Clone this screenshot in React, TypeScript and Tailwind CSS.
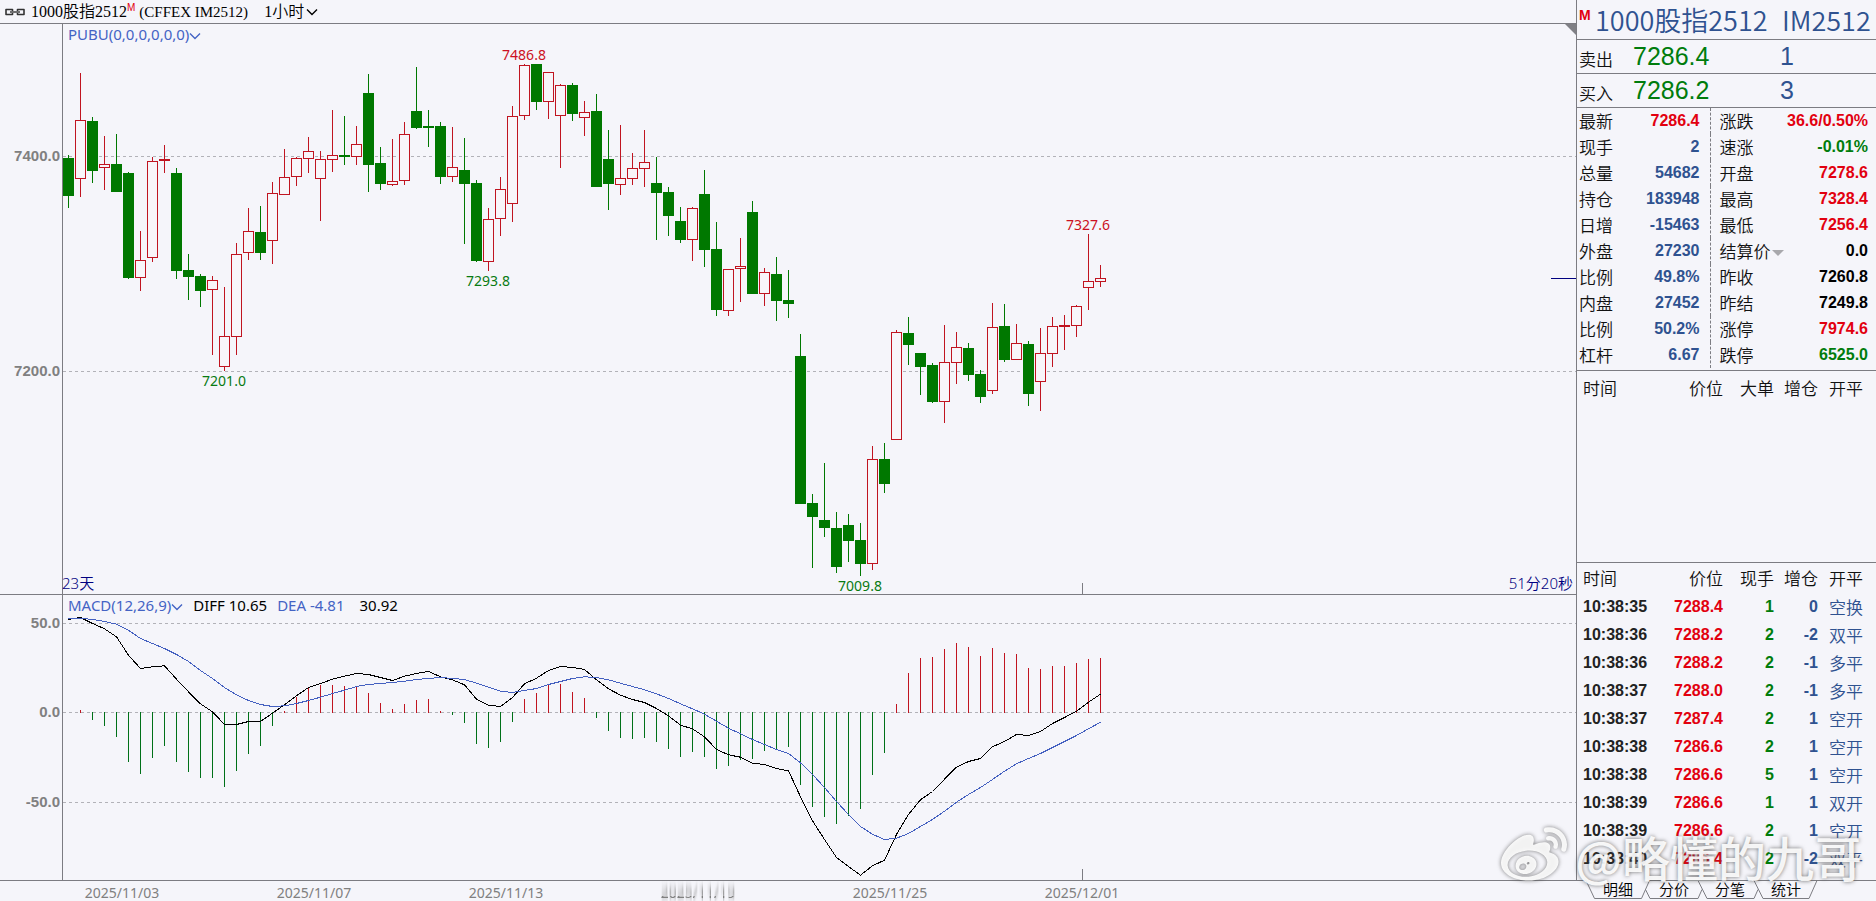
import React from "react";
import { FaWeibo } from "react-icons/fa";

type Candle = [high: number, top: number, bottom: number, low: number, kind: "r" | "g"];

// Chart geometry is kept on a grid with three units per pixel.
const UNIT = 3;
const px = (v: number) => Math.floor(v / UNIT);
const centerX = (i: number) => 68 + i * 12;

const shift = (list: Candle[], dy: number): Candle[] =>
  list.map(([h, t, b, l, k]) => [h + dy, t + dy, b + dy, l + dy, k]);

const candles: Candle[] = [
  [465, 474, 587, 623, "g"], [219, 360, 536, 590, "r"], [351, 363, 510, 548, "g"], [408, 492, 503, 567, "r"],
  [402, 492, 575, 575, "g"], [516, 519, 833, 836, "g"], [693, 780, 833, 872, "r"], [471, 483, 773, 785, "r"],
  [435, 477, 482, 518, "r"], [504, 519, 812, 836, "g"], [762, 810, 830, 899, "g"], [822, 828, 872, 920, "g"],
  [828, 840, 869, 1064, "r"], [861, 1008, 1100, 1112, "r"], [729, 762, 1010, 1064, "r"], [624, 693, 758, 779, "r"],
  [618, 696, 758, 779, "g"], [546, 579, 722, 791, "r"], [447, 531, 584, 584, "r"], [471, 474, 530, 557, "r"],
  [411, 453, 476, 518, "r"], [453, 477, 536, 662, "r"], [330, 465, 479, 515, "r"], [348, 465, 470, 494, "g"],
  [378, 432, 470, 494, "r"], [222, 279, 494, 575, "g"], [441, 489, 551, 567, "g"], [417, 543, 554, 557, "r"],
  [366, 402, 542, 554, "r"], [201, 333, 381, 386, "g"],
  ...shift(
    [
      [240, 288, 293, 350, "g"], [276, 288, 440, 461, "g"], [291, 411, 440, 455, "r"], [324, 420, 461, 641, "g"],
      [450, 459, 692, 695, "g"], [534, 567, 695, 722, "r"], [441, 477, 566, 617, "r"], [228, 258, 521, 575, "r"],
      [102, 105, 257, 269, "r"], [102, 102, 215, 239, "g"], [126, 126, 215, 266, "r"], [162, 165, 257, 413, "r"],
      [159, 165, 251, 272, "g"], [213, 246, 263, 317, "r"], [192, 243, 470, 470, "g"], [300, 387, 461, 539, "g"],
      [285, 444, 464, 494, "r"], [369, 414, 446, 464, "r"], [300, 396, 416, 470, "r"], [381, 459, 488, 629, "g"],
      [471, 486, 557, 617, "g"], [531, 573, 629, 638, "g"], [531, 534, 629, 692, "r"], [420, 492, 659, 710, "g"],
      [576, 657, 839, 857, "g"], [717, 717, 842, 857, "r"], [624, 708, 716, 815, "r"], [513, 546, 791, 791, "g"],
      [714, 726, 791, 827, "r"], [681, 732, 812, 872, "g"], [720, 810, 821, 863, "g"],
    ],
    90,
  ),
  ...shift(
    [
      [462, 528, 971, 971, "g"], [942, 969, 1010, 1163, "g"], [849, 1020, 1043, 1070, "g"], [996, 1044, 1160, 1178, "g"],
      [1002, 1035, 1082, 1145, "g"], [1029, 1080, 1151, 1187, "g"], [798, 837, 1151, 1169, "r"], [789, 837, 911, 938, "g"],
      [450, 456, 779, 779, "r"], [411, 459, 494, 554, "g"], [519, 519, 560, 644, "g"], [549, 555, 665, 668, "g"],
      [435, 546, 665, 728, "r"], [456, 501, 548, 611, "r"], [489, 504, 584, 602, "g"], [570, 582, 650, 668, "g"],
      [369, 441, 632, 641, "r"], [372, 438, 539, 545, "g"], [432, 489, 539, 539, "r"], [483, 492, 641, 677, "g"],
      [444, 519, 605, 692, "r"], [411, 438, 521, 560, "r"], [405, 435, 440, 509, "r"], [375, 378, 437, 470, "r"],
      [162, 303, 323, 389, "r"], [255, 294, 305, 320, "r"],
    ],
    540,
  ),
];

// Signed distance of each value from the zero line.
const early = (list: number[]) => list.map((v) => v - 457);
const late = (list: number[]) => list.map((v) => v - 397);

const histogram = [
  ...early([457, 450, 479, 497, 530, 605, 641, 593, 557, 605, 635, 653, 653, 680, 632, 581, 557, 497, 453, 411, 384, 375, 375, 378, 381, 399, 429, 447]),
  ...late([
    372, 360, 357, 393, 404, 428, 491, 503, 485, 425, 357, 339, 315, 312, 336, 354, 413, 452, 473, 476, 473, 485, 506, 530,
    515, 530, 566, 557, 539, 536, 512, 509, 500, 614, 680, 710, 731, 707, 686, 584, 518, 372, 279, 234, 231, 207, 189, 201,
    228, 204, 219, 222, 264, 267, 258, 258, 249, 237, 234,
  ]),
];

const diff = [
  ...early([178, 172, 190, 206, 230, 285, 325, 320, 317, 357, 395, 431, 455, 493, 493, 484, 484, 459, 434, 407, 382, 370, 357, 348, 340, 343, 352, 361]),
  ...late([
    288, 280, 274, 290, 299, 314, 357, 375, 379, 352, 311, 294, 271, 259, 262, 268, 299, 326, 345, 358, 367, 385, 407, 435,
    446, 470, 508, 524, 531, 549, 553, 565, 572, 650, 722, 778, 832, 859, 885, 857, 840, 763, 703, 659, 634, 597, 561, 544,
    535, 500, 484, 463, 466, 454, 430, 412, 393, 366, 342,
  ]),
];

const dea = [
  ...early([176, 174, 178, 184, 192, 210, 235, 250, 265, 283, 304, 331, 355, 382, 404, 421, 433, 439, 437, 430, 421, 411, 400, 390, 379, 373, 370, 367]),
  ...late([
    303, 298, 295, 292, 295, 298, 309, 321, 333, 337, 331, 325, 313, 304, 295, 290, 292, 299, 309, 319, 329, 341, 355, 371,
    386, 402, 423, 444, 461, 478, 493, 508, 520, 548, 583, 622, 664, 703, 739, 762, 778, 774, 760, 739, 718, 693, 666, 643,
    622, 598, 573, 551, 535, 520, 502, 484, 466, 446, 426,
  ]),
];

const ZERO_Y = 712;
const toPoints = (list: number[]) =>
  list.map((v, i) => `${centerX(i) + 0.5},${(ZERO_Y + 0.5 + v / UNIT).toFixed(1)}`).join(" ");

const latin = "font-['Noto_Sans','Noto_Sans_CJK_SC',sans-serif]";
const axisLabel = "fill-[#808080] font-['Liberation_Sans',sans-serif] text-[15px] font-bold";

function Grid({ y, label }: { y: number; label: string }) {
  return (
    <g>
      <line x1="63" x2="100%" y1={y + 0.5} y2={y + 0.5} stroke="#b2b2b8" strokeDasharray="3 3" />
      <text x="60" y={y + 5} textAnchor="end" className={axisLabel}>
        {label}
      </text>
    </g>
  );
}

function PriceMark({ x, y, up, children }: { x: number; y: number; up?: boolean; children: string }) {
  return (
    <text
      x={x}
      y={y}
      textAnchor="middle"
      className={`${latin} text-[14px] ${up ? "fill-[#cc1022]" : "fill-[#087a12]"}`}
    >
      {children}
    </text>
  );
}

function Chevron({ className }: { className?: string }) {
  return (
    <svg width="12" height="8" viewBox="0 0 12 8" className={className} aria-hidden="true">
      <path d="M1 1.5 6 6.5 11 1.5" fill="none" stroke="currentColor" strokeWidth="1.4" />
    </svg>
  );
}

function PricePane() {
  return (
    <section className="relative border-b border-[#7c7c82]">
      <svg className="block h-[570px] w-full" role="img" aria-label="1小时K线">
        <g transform="translate(0,-24)">
          <Grid y={156} label="7400.0" />
          <Grid y={371} label="7200.0" />
          <g shapeRendering="crispEdges">
            {candles.map(([h, t, b, l, k], i) => {
              const x = centerX(i);
              const top = px(t);
              const height = px(b) - top + 1;
              const color = k === "g" ? "#007800" : "#c01420";
              return (
                <g key={i}>
                  <rect x={x} y={px(h)} width="1" height={px(l) - px(h) + 1} fill={color} />
                  <rect x={x - 5} y={top} width="11" height={height} fill={color} />
                  {k === "r" && height > 2 && (
                    <rect x={x - 4} y={top + 1} width="9" height={height - 2} fill="#f8f5f9" />
                  )}
                </g>
              );
            })}
            <rect x="62" y="24" width="1" height="570" fill="#7c7c82" />
            <rect x="1082" y="583" width="1" height="11" fill="#7c7c82" />
          </g>
          <PriceMark x={524} y={60} up>7486.8</PriceMark>
          <PriceMark x={488} y={286}>7293.8</PriceMark>
          <PriceMark x={224} y={386}>7201.0</PriceMark>
          <PriceMark x={860} y={591}>7009.8</PriceMark>
          <PriceMark x={1088} y={230} up>7327.6</PriceMark>
          <svg x="100%" y="0" overflow="visible">
            <path d="M-11 24H0V35Z" fill="#808086" />
            <rect x="-25" y="278" width="25" height="1" fill="#000080" />
          </svg>
        </g>
      </svg>
      <button type="button" className={`absolute left-[68px] top-0 flex items-center text-[15px] leading-5 text-[#4463c4] ${latin}`}>
        PUBU(0,0,0,0,0,0)
        <Chevron className="mt-1" />
      </button>
      <div className={`absolute inset-x-0 bottom-0 flex justify-between pl-[62px] pr-[3px] text-[15px] font-[350] leading-[22px] text-[#000080] ${latin}`}>
        <span>23天</span>
        <span>51分20秒</span>
      </div>
    </section>
  );
}

function MacdPane() {
  return (
    <section className="relative border-b border-[#7c7c82]">
      <svg className="block h-[285px] w-full" role="img" aria-label="MACD">
        <g transform="translate(0,-595)">
          <Grid y={623} label="50.0" />
          <Grid y={712} label="0.0" />
          <Grid y={802} label="-50.0" />
          <g shapeRendering="crispEdges">
            {histogram.map((v, i) => {
              if (v === 0) return null;
              const end = ZERO_Y + Math.round(v / UNIT);
              return (
                <rect
                  key={i}
                  x={centerX(i)}
                  y={Math.min(end, ZERO_Y)}
                  width="1"
                  height={Math.abs(end - ZERO_Y) + 1}
                  fill={v < 0 ? "#c01420" : "#007018"}
                />
              );
            })}
            <rect x="62" y="595" width="1" height="285" fill="#7c7c82" />
            <rect x="1082" y="869" width="1" height="11" fill="#7c7c82" />
            <polyline points={toPoints(diff)} fill="none" stroke="#000000" />
            <polyline points={toPoints(dea)} fill="none" stroke="#4460c0" />
          </g>
        </g>
      </svg>
      <div className={`absolute left-[68px] top-0 flex items-center gap-[10px] text-[15px] leading-5 text-black ${latin}`}>
        <button type="button" className="flex items-center text-[#4463c4]">
          MACD(12,26,9)
          <Chevron className="mt-1" />
        </button>
        <span>DIFF 10.65</span>
        <span className="text-[#4463c4]">DEA -4.81</span>
        <span className="pl-[5px]">30.92</span>
      </div>
    </section>
  );
}

const dates: [number, string][] = [
  [122, "2025/11/03"],
  [314, "2025/11/07"],
  [506, "2025/11/13"],
  [698, "2025/11/19"],
  [890, "2025/11/25"],
  [1082, "2025/12/01"],
];

function DateAxis() {
  return (
    <svg className="block h-5 w-full" role="img" aria-label="日期">
      <filter id="smear" filterUnits="userSpaceOnUse" x="650" y="0" width="100" height="20">
        <feGaussianBlur in="SourceGraphic" stdDeviation="0 4" result="soft" />
        <feOffset in="SourceGraphic" dx="0" dy="0" x="650" y="15" width="100" height="5" result="base" />
        <feMerge>
          <feMergeNode in="soft" />
          <feMergeNode in="base" />
        </feMerge>
      </filter>
      {dates.map(([x, label]) => (
        <text
          key={label}
          x={x}
          y="17"
          textAnchor="middle"
          filter={x === 698 ? "url(#smear)" : undefined}
          className={`${latin} fill-[#808080] text-[14px]`}
        >
          {label}
        </text>
      ))}
    </svg>
  );
}

const RED = "text-[#e2000f]";
const GREEN = "text-[#007c0c]";
const BLUE = "text-[#2f5290]";
const BLACK = "text-black";

const quotes: [string, string, string, string, string, string][] = [
  ["最新", "7286.4", RED, "涨跌", "36.6/0.50%", RED],
  ["现手", "2", BLUE, "速涨", "-0.01%", GREEN],
  ["总量", "54682", BLUE, "开盘", "7278.6", RED],
  ["持仓", "183948", BLUE, "最高", "7328.4", RED],
  ["日增", "-15463", BLUE, "最低", "7256.4", RED],
  ["外盘", "27230", BLUE, "结算价", "0.0", BLACK],
  ["比例", "49.8%", BLUE, "昨收", "7260.8", BLACK],
  ["内盘", "27452", BLUE, "昨结", "7249.8", BLACK],
  ["比例", "50.2%", BLUE, "涨停", "7974.6", RED],
  ["杠杆", "6.67", BLUE, "跌停", "6525.0", GREEN],
];

const ticks: [string, string, string, string, string][] = [
  ["10:38:35", "7288.4", "1", "0", "空换"],
  ["10:38:36", "7288.2", "2", "-2", "双平"],
  ["10:38:36", "7288.2", "2", "-1", "多平"],
  ["10:38:37", "7288.0", "2", "-1", "多平"],
  ["10:38:37", "7287.4", "2", "1", "空开"],
  ["10:38:38", "7286.6", "2", "1", "空开"],
  ["10:38:38", "7286.6", "5", "1", "空开"],
  ["10:38:39", "7286.6", "1", "1", "双开"],
  ["10:38:39", "7286.6", "2", "1", "空开"],
  ["10:38:40", "7286.4", "2", "-2", "双平"],
];

const cjk = "font-['Noto_Sans_CJK_SC',sans-serif] font-[350] text-[17px]";
const num = "font-['Liberation_Sans',sans-serif] text-[16px] font-bold";

function OfferRow({ label, price, lots }: { label: string; price: string; lots: string }) {
  return (
    <div className="flex h-[34px] items-center border-b border-[#7c7c82] pt-px font-['Liberation_Sans',sans-serif] text-[25px]">
      <span className={`w-[56px] pl-[2px] pt-1 text-[#111] ${cjk}`}>{label}</span>
      <span className={`w-[120px] ${GREEN}`}>{price}</span>
      <span className={`w-[68px] text-center ${BLUE}`}>{lots}</span>
    </div>
  );
}

function TradeTable({ lotsTitle, rows }: { lotsTitle: string; rows: typeof ticks }) {
  return (
    <table className="w-full table-fixed border-collapse">
      <colgroup>
        <col className="w-[80px]" />
        <col className="w-[66px]" />
        <col className="w-[51px]" />
        <col className="w-[44px]" />
        <col />
      </colgroup>
      <thead>
        <tr className={`h-[30px] text-[#111] ${cjk}`}>
          <th className="p-0 pl-[6px] text-left font-[350]">时间</th>
          <th className="p-0 text-right font-[350]">价位</th>
          <th className="p-0 text-right font-[350]">{lotsTitle}</th>
          <th className="p-0 text-right font-[350]">增仓</th>
          <th className="p-0 pl-[11px] text-left font-[350]">开平</th>
        </tr>
      </thead>
      <tbody>
        {rows.map(([time, price, lots, change, side], i) => (
          <tr key={i} className={`h-7 leading-[26px] ${num}`}>
            <td className="p-0 pl-[6px] text-[#222]">{time}</td>
            <td className={`p-0 text-right ${RED}`}>{price}</td>
            <td className={`p-0 text-right ${GREEN}`}>{lots}</td>
            <td className={`p-0 text-right ${BLUE}`}>{change}</td>
            <td className={`p-0 pl-[11px] ${BLUE} ${cjk}`}>{side}</td>
          </tr>
        ))}
      </tbody>
    </table>
  );
}

function Tabs() {
  return (
    <nav className="relative h-[21px]">
      <svg className="absolute inset-0 h-full w-full" aria-hidden="true">
        <path
          d="M0 .5H10L18.5 18.5H65.5L73.5 .5M69.5 9.5 74 18.5H122L126 9.5M122 .5 131 18.5H178L182 9.5M178 .5 187 18.5H233L241 .5"
          fill="none"
          stroke="#7c7c82"
        />
        <line x1="73" x2="100%" y1=".5" y2=".5" stroke="#7c7c82" />
      </svg>
      <div className="relative flex pl-[14px]">
        {["明细", "分价", "分笔", "统计"].map((t) => (
          <button
            key={t}
            type="button"
            className="w-[56px] font-['Noto_Sans_CJK_SC',sans-serif] text-[15px] font-[350] leading-[18px] text-black"
          >
            {t}
          </button>
        ))}
      </div>
    </nav>
  );
}

export default function App() {
  return (
    <div className="relative flex min-h-screen overflow-hidden bg-[#f5f5fa]">
      <main className="min-w-0 flex-1">
        <header className="flex h-6 items-center border-b border-[#7c7c82] pl-[5px] font-['Liberation_Serif','Noto_Sans_CJK_SC',serif] text-[15px] font-[350] leading-5 text-black">
          <svg width="20" height="8" viewBox="0 0 20 8" className="mr-[6px]" aria-hidden="true">
            <path
              d="M7.5 3V1.5H1V6.5H7.5V5M12.5 3V1.5H19V6.500H12.5V5"
              fill="none"
              stroke="#333"
              strokeWidth="1.6"
              strokeLinejoin="round"
            />
            <path d="M5 4H15" stroke="#333" strokeWidth="1.4" />
          </svg>
          <h1 className="flex items-center whitespace-pre font-[350]">
            <span className="text-[16px]">1000股指2512</span>
            <sup className="top-0 pb-2 font-['Liberation_Sans',sans-serif] text-[10px] leading-none text-[#e2000f]">M</sup>
            <span className="pl-1">(CFFEX IM2512)</span>
          </h1>
          <button type="button" className="ml-4 flex items-center gap-[2px] text-[16px]">
            1小时
            <Chevron />
          </button>
        </header>
        <PricePane />
        <MacdPane />
        <DateAxis />
      </main>

      <aside className="w-[300px] shrink-0">
        <div className="flex h-[880px] flex-col border-l border-[#7c7c82]">
          <h2 className={`flex h-10 shrink-0 whitespace-nowrap border-b border-[#7c7c82] pl-[2px] font-['Noto_Sans_CJK_SC',sans-serif] text-[27px] font-[350] leading-[40px] ${BLUE}`}>
            <sup className={`top-0 w-[16px] pt-2 font-['Liberation_Sans',sans-serif] text-[14px] font-bold leading-none ${RED}`}>M</sup>
            <span className="w-[187px]">1000股指2512</span>
            <span>IM2512</span>
          </h2>
          <OfferRow label="卖出" price="7286.4" lots="1" />
          <OfferRow label="买入" price="7286.2" lots="3" />
          <div className="border-b border-[#7c7c82] pb-[2px]">
            <table className="w-full table-fixed border-collapse">
              <colgroup>
                <col className="w-[50px]" />
                <col className="w-[83px]" />
                <col className="w-[76px]" />
                <col />
              </colgroup>
              <tbody>
                {quotes.map(([l1, v1, c1, l2, v2, c2], i) => (
                  <tr key={i} className={`h-[26px] leading-[26px] ${num}`}>
                    <th className={`p-0 pl-[2px] text-left text-[#111] ${cjk}`}>{l1}</th>
                    <td className={`border-r border-dashed border-[#7c7c82] p-0 pr-[10px] text-right ${c1}`}>{v1}</td>
                    <th className={`whitespace-nowrap p-0 pl-[9px] text-left text-[#111] ${cjk}`}>
                      {l2}
                      {l2 === "结算价" && (
                        <svg width="12" height="6" className="ml-px inline-block" aria-hidden="true">
                          <path d="M0 0H12L6 6Z" fill="#a8a8ac" />
                        </svg>
                      )}
                    </th>
                    <td className={`p-0 pr-2 text-right ${c2}`}>{v2}</td>
                  </tr>
                ))}
              </tbody>
            </table>
          </div>
          <div className="grow border-b border-[#7c7c82] pt-[2px]">
            <TradeTable lotsTitle="大单" rows={[]} />
          </div>
          <div className="pb-[7px]">
            <TradeTable lotsTitle="现手" rows={ticks} />
          </div>
        </div>
        <Tabs />
      </aside>

      <div className="pointer-events-none absolute bottom-3 right-[14px] flex items-center whitespace-nowrap font-['Noto_Sans_CJK_SC',sans-serif] text-[48px] font-medium leading-[64px] text-white/90 [text-shadow:0_0_4px_rgba(80,80,80,0.8)]">
        <FaWeibo size={66} className="mr-2 drop-shadow-[0_0_2px_rgba(80,80,80,0.8)]" aria-hidden="true" />
        @略懂的九哥
      </div>
    </div>
  );
}
